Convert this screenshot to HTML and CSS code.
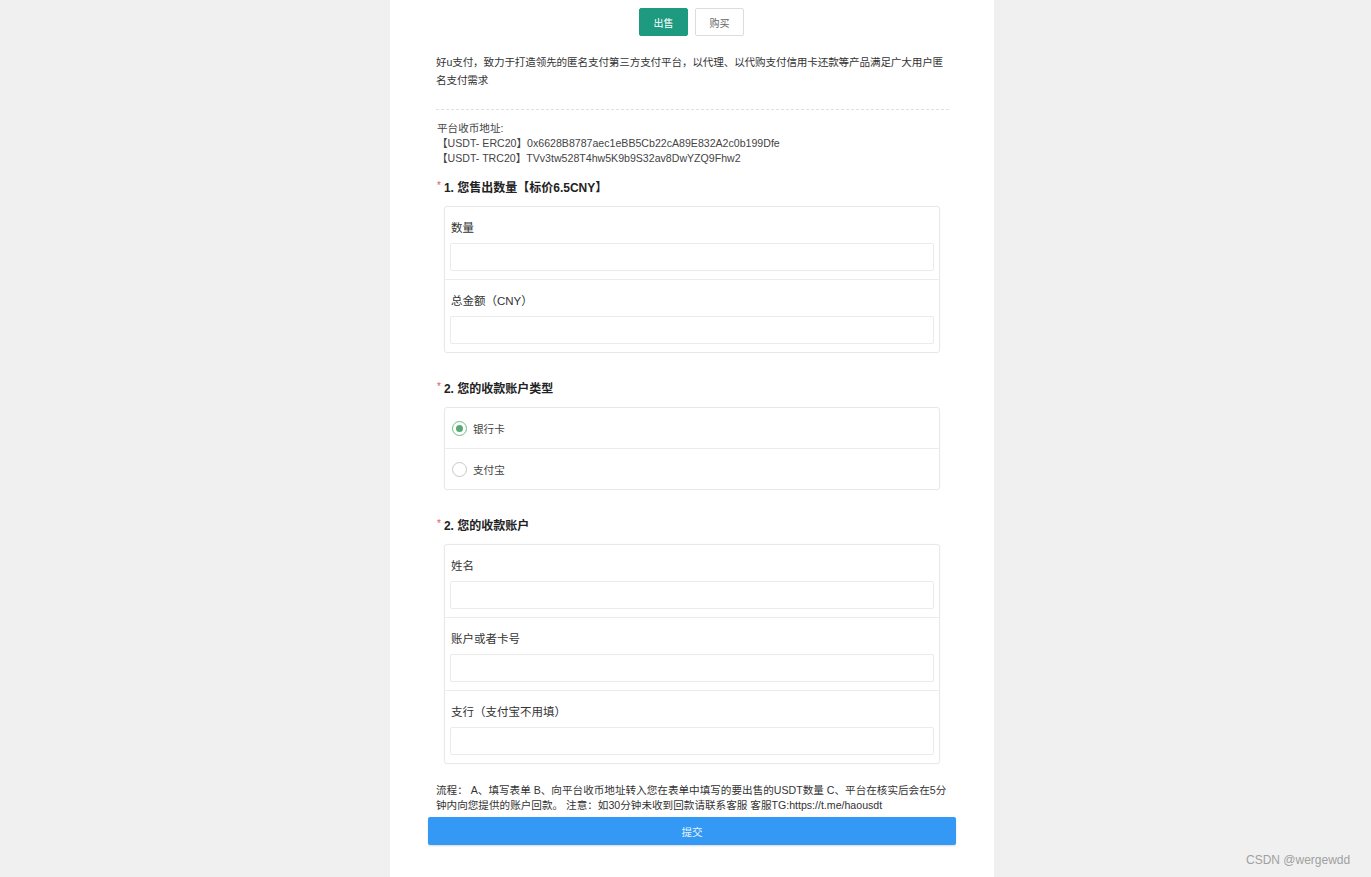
FILE: index.html
```html
<!DOCTYPE html>
<html lang="zh-CN">
<head>
<meta charset="utf-8">
<title>好u支付</title>
<link rel="stylesheet" href="styles.css">
</head>
<body>
<div class="page">
  <div class="tabs">
    <button class="tab tab-active">出售</button>
    <button class="tab">购买</button>
  </div>
  <p class="intro">好u支付，致力于打造领先的匿名支付第三方支付平台，以代理、以代购支付信用卡还款等产品满足广大用户匿名支付需求</p>
  <div class="address">
    <div>平台收币地址:</div>
    <div>【USDT- ERC20】0x6628B8787aec1eBB5Cb22cA89E832A2c0b199Dfe</div>
    <div>【USDT- TRC20】TVv3tw528T4hw5K9b9S32av8DwYZQ9Fhw2</div>
  </div>

  <section class="section first">
    <h2 class="q"><span class="req">*</span>1. 您售出数量【标价6.5CNY】</h2>
    <div class="card">
      <div class="field">
        <label class="lbl">数量</label>
        <input class="inp" type="text">
      </div>
      <div class="field">
        <label class="lbl">总金额（CNY）</label>
        <input class="inp" type="text">
      </div>
    </div>
  </section>

  <section class="section">
    <h2 class="q"><span class="req">*</span>2. 您的收款账户类型</h2>
    <div class="card">
      <div class="opt">
        <span class="radio radio-on"></span>
        <span class="opt-text">银行卡</span>
      </div>
      <div class="opt">
        <span class="radio"></span>
        <span class="opt-text">支付宝</span>
      </div>
    </div>
  </section>

  <section class="section">
    <h2 class="q"><span class="req">*</span>2. 您的收款账户</h2>
    <div class="card">
      <div class="field">
        <label class="lbl">姓名</label>
        <input class="inp" type="text">
      </div>
      <div class="field">
        <label class="lbl">账户或者卡号</label>
        <input class="inp" type="text">
      </div>
      <div class="field">
        <label class="lbl">支行（支付宝不用填）</label>
        <input class="inp" type="text">
      </div>
    </div>
  </section>

  <p class="flow">流程： A、填写表单 B、向平台收币地址转入您在表单中填写的要出售的USDT数量 C、平台在核实后会在5分钟内向您提供的账户回款。 注意：如30分钟未收到回款请联系客服 客服TG:https://t.me/haousdt</p>
  <button class="submit">提交</button>
</div>
<div class="watermark">CSDN @wergewdd</div>
</body>
</html>
```

FILE: styles.css
```css
* { box-sizing: border-box; }
html, body { margin: 0; padding: 0; }
body {
  background: #f0f0f0;
  font-family: "Liberation Sans", "Noto Sans CJK SC", sans-serif;
  color: #333;
  min-height: 877px;
}
.page {
  width: 604px;
  margin-left: 390px;
  min-height: 877px;
  background: #fff;
  padding: 8px 45px 20px 46px;
}
.tabs {
  display: flex;
  justify-content: center;
  gap: 7px;
  padding-right: 2px;
}
.tab {
  width: 49px;
  height: 28px;
  border: 1px solid #dcdcdc;
  background: #fff;
  color: #666;
  font-family: inherit;
  font-size: 10px;
  border-radius: 2px;
  padding: 0;
}
.tab-active {
  background: #1d9a80;
  border-color: #1d9a80;
  color: #fff;
}
.intro {
  margin: 17px 0 0;
  font-size: 10.6px;
  line-height: 18px;
  letter-spacing: -0.15px;
  padding-bottom: 20px;
  border-bottom: 1px dashed #e0e0e0;
}
.address {
  padding-top: 11px;
  padding-left: 1px;
  font-size: 10.6px;
  line-height: 15px;
  color: #444;
}
.section { margin-top: 27px; }
.section.first { margin-top: 13px; }
.q {
  margin: 0 0 9px;
  font-size: 12px;
  line-height: 18px;
  font-weight: bold;
  color: #222;
  padding-left: 1px;
}
.req {
  color: #e55;
  font-weight: normal;
  font-size: 10px;
  vertical-align: top;
  line-height: 14px;
  margin-right: 3px;
}
.card {
  margin-left: 8px;
  width: 496px;
  border: 1px solid #e8e8e8;
  border-radius: 3px;
  box-shadow: 0 0 2px rgba(0,0,0,0.04);
}
.field {
  padding: 13px 5px 8px;
  border-top: 1px solid #ececec;
}
.field:first-child { border-top: none; }
.lbl {
  display: block;
  font-size: 11.5px;
  line-height: 16px;
  margin: 0 0 7px 1px;
  color: #333;
}
.inp {
  display: block;
  width: 100%;
  height: 28px;
  border: 1px solid #ebebeb;
  border-radius: 2px;
  background: #fff;
  outline: none;
}
.opt {
  height: 41px;
  display: flex;
  align-items: center;
  padding-left: 7px;
  border-top: 1px solid #ececec;
}
.opt:first-child { border-top: none; height: 40px; }
.radio {
  width: 15px;
  height: 15px;
  border: 1px solid #c8c8c8;
  border-radius: 50%;
  display: flex;
  align-items: center;
  justify-content: center;
}
.radio-on { border-color: #6cbf84; }
.radio-on::after {
  content: "";
  width: 7px;
  height: 7px;
  border-radius: 50%;
  background: #5aa874;
}
.opt-text {
  margin-left: 6px;
  font-size: 10.6px;
  color: #444;
}
.flow {
  margin: 19px 0 0;
  font-size: 10.6px;
  line-height: 15px;
  color: #333;
}
.submit {
  display: block;
  margin: 4px 0 0 -8px;
  width: 528px;
  height: 28px;
  border: none;
  border-radius: 2px;
  background: #3399f5;
  color: #e8f3ff;
  font-family: inherit;
  font-size: 10.6px;
  box-shadow: 0 1px 2px rgba(0,0,0,0.15);
}
.watermark {
  position: absolute;
  left: 1246px;
  top: 852px;
  font-size: 12px;
  line-height: 16px;
  color: #a0a0a0;
}
```
